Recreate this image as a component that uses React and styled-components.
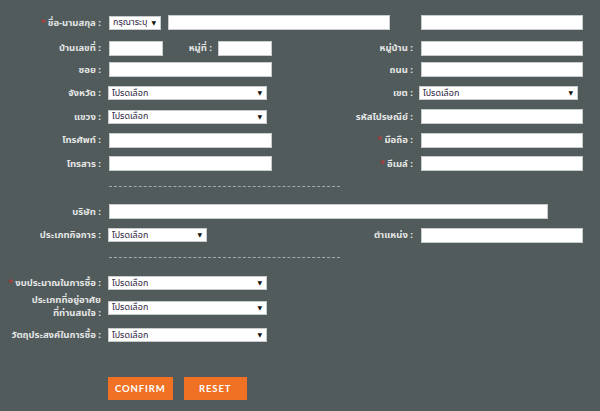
import styled, { createGlobalStyle } from "styled-components";

const GlobalStyle = createGlobalStyle`
  html, body {
    margin: 0;
    padding: 0;
    background: #515b5b;
  }
  body {
    font-family: Tahoma, "Noto Sans Thai", "Noto Sans", "DejaVu Sans", sans-serif;
  }
`;

const FONT = `Tahoma, "Noto Sans Thai", "Noto Sans", "DejaVu Sans", sans-serif`;

export default function App() {
  return (
    <Page>
      <GlobalStyle />
      <Form>
        <Row>
          <Label>
            <Req>*</Req>ชื่อ-นามสกุล :
          </Label>
          <Span cols={2}>
            <Select width={52} value="กรุณาระบุ" />
            <Input width={222} />
          </Span>
          <Input />
        </Row>

        <Row $mt={2}>
          <Label>บ้านเลขที่ :</Label>
          <Inline>
            <Input width={54} />
            <InnerLabel>หมู่ที่ :</InnerLabel>
            <Input width={54} />
          </Inline>
          <Label>หมู่บ้าน :</Label>
          <Input />
        </Row>

        <Row $mt={-2}>
          <Label>ซอย :</Label>
          <Input />
          <Label>ถนน :</Label>
          <Input />
        </Row>

        <Row>
          <Label>จังหวัด :</Label>
          <Select width={159} shift={-1} />
          <Label>เขต :</Label>
          <Select width={159} shift={-2} />
        </Row>

        <Row>
          <Label>แขวง :</Label>
          <Select width={159} shift={-1} />
          <Label>รหัสไปรษณีย์ :</Label>
          <Input />
        </Row>

        <Row>
          <Label>โทรศัพท์ :</Label>
          <Input />
          <Label>
            <Req>*</Req>มือถือ :
          </Label>
          <Input />
        </Row>

        <Row>
          <Label>โทรสาร :</Label>
          <Input />
          <Label>
            <Req>*</Req>อีเมล์ :
          </Label>
          <Input />
        </Row>

        <Divider />

        <Row>
          <Label>บริษัท :</Label>
          <Span cols={3}>
            <Input width={439} />
          </Span>
        </Row>

        <Row>
          <Label>ประเภทกิจการ :</Label>
          <Select width={99} shift={-1} />
          <Label>ตำแหน่ง :</Label>
          <Input />
        </Row>

        <Divider />

        <Row>
          <Label>
            <Req>*</Req>งบประมาณในการซื้อ :
          </Label>
          <Select width={159} shift={-1} />
        </Row>

        <Row $mt={-1}>
          <TwoLineLabel>
            ประเภทที่อยู่อาศัย
            <br />
            ที่ท่านสนใจ :
          </TwoLineLabel>
          <Select width={159} shift={-1} />
        </Row>

        <Row $mt={2}>
          <Label>วัตถุประสงค์ในการซื้อ :</Label>
          <Select width={159} shift={-1} />
        </Row>

        <Buttons>
          <Button type="button">CONFIRM</Button>
          <Button type="button">RESET</Button>
        </Buttons>
      </Form>
    </Page>
  );
}

function Select({ width, shift = 0, value = "โปรดเลือก" }) {
  return (
    <SelectBox $width={width} $shift={shift} role="combobox" tabIndex={0}>
      <SelectText>{value}</SelectText>
      <Arrow>▼</Arrow>
    </SelectBox>
  );
}

const Page = styled.div`
  width: 600px;
  height: 411px;
  overflow: hidden;
  background: #515b5b;
`;

const Form = styled.form`
  display: flex;
  flex-direction: column;
  gap: 8.5px;
  padding-top: 15px;
`;

const Row = styled.div`
  display: grid;
  grid-template-columns: 109px 163px 149px 162px;
  align-items: center;
  min-height: 15px;
  margin-top: ${(p) => p.$mt || 0}px;
`;

const Label = styled.label`
  font-family: ${FONT};
  font-size: 9.5px;
  font-weight: bold;
  line-height: 12px;
  color: #e4e6e6;
  text-align: right;
  padding-right: 8px;
  white-space: nowrap;
`;

const TwoLineLabel = styled(Label)`
  line-height: 13px;
  margin: -4px 0 -3px;
`;

const InnerLabel = styled(Label)`
  flex: 1;
  padding-right: 6px;
`;

const Req = styled.span`
  color: #c8312d;
  margin-right: 2px;
  font-weight: normal;
`;

const Span = styled.div`
  grid-column: span ${(p) => p.cols};
  display: flex;
  align-items: center;
  gap: 7px;
`;

const Inline = styled.div`
  display: flex;
  align-items: center;
`;

const Input = styled.input`
  box-sizing: border-box;
  width: ${(p) => (p.width ? `${p.width}px` : "100%")};
  height: 15px;
  margin: 0;
  padding: 0 3px;
  border: 1px solid #c9cccc;
  background: #fff;
  outline: none;
`;

const SelectBox = styled.div`
  box-sizing: border-box;
  display: flex;
  align-items: center;
  justify-content: space-between;
  width: ${(p) => p.$width}px;
  height: 14px;
  margin-left: ${(p) => p.$shift}px;
  padding: 0 4px 0 3px;
  background: #fff;
  border: 1px solid #c9cccc;
  overflow: hidden;
  outline: none;
`;

const SelectText = styled.span`
  font-family: ${FONT};
  font-size: 9px;
  line-height: 1;
  color: #2b2140;
  white-space: nowrap;
`;

const Arrow = styled.span`
  font-family: "DejaVu Sans", sans-serif;
  font-size: 6px;
  line-height: 1;
  color: #111;
  margin-left: 3px;
`;

const Divider = styled.hr`
  width: 231px;
  margin: 6px 0 9px 109px;
  border: none;
  border-top: 1px dashed #a3aaaa;
  height: 0;
`;

const Buttons = styled.div`
  display: flex;
  gap: 11px;
  margin-top: 26px;
  padding-left: 108px;
`;

const Button = styled.button`
  height: 23px;
  min-width: 63px;
  padding: 0 7px;
  border: none;
  background: #f07124;
  color: #fff;
  font-family: Lato, "Open Sans", sans-serif;
  font-weight: bold;
  font-size: 9.5px;
  letter-spacing: 0.9px;
  cursor: pointer;
`;
